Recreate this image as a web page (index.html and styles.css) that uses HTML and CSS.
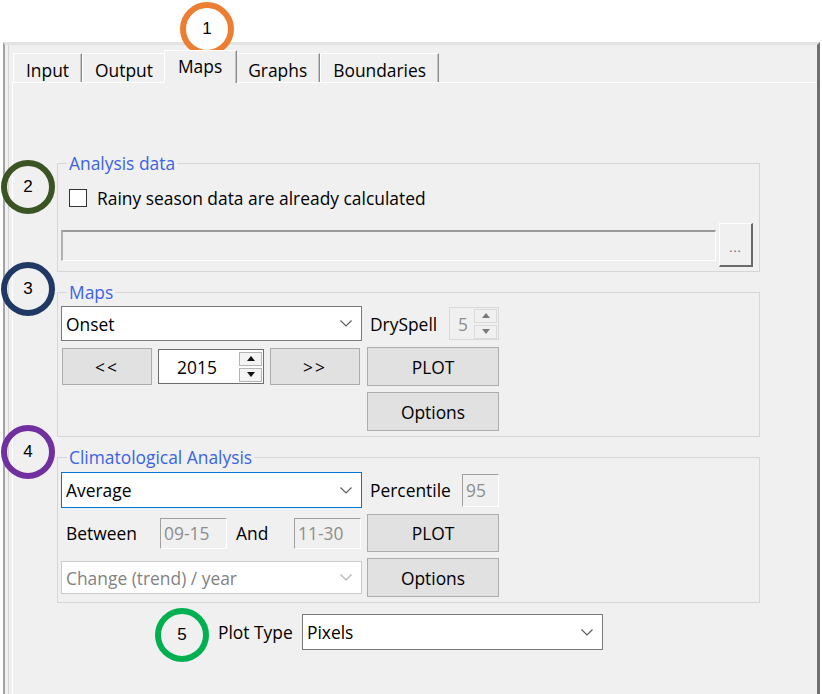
FILE: index.html
```html
<!DOCTYPE html>
<html lang="en">
<head>
<meta charset="utf-8">
<title>Maps</title>
<link rel="stylesheet" href="styles.css">
</head>
<body>
<div class="window">
  <div class="frame">
    <div class="tabs">
      <div class="tab">Input</div>
      <div class="tab">Output</div>
      <div class="tab active">Maps</div>
      <div class="tab">Graphs</div>
      <div class="tab">Boundaries</div>
    </div>
    <div class="page">
      <fieldset class="group g-data">
        <legend>Analysis data</legend>
        <label class="check-row"><span class="checkbox"></span>Rainy season data are already calculated</label>
        <div class="file-row">
          <div class="sunken path-field"></div>
          <div class="browse">...</div>
        </div>
      </fieldset>

      <fieldset class="group g-maps">
        <legend>Maps</legend>
        <div class="ctl-grid maps-grid">
          <div class="combo"><span>Onset</span><svg class="chev" width="12" height="7" viewBox="0 0 12 7"><polyline points="0.5,0.5 6,6 11.5,0.5"/></svg></div>
          <div class="pair"><span>DrySpell</span>
            <div class="spin spin-small disabled"><span class="spin-val">5</span><span class="arrows"><span class="arr up"></span><span class="arr down"></span></span></div>
          </div>
          <div class="nav">
            <button class="btn nav-btn">&lt;&lt;</button>
            <div class="spin year"><span class="spin-val">2015</span><span class="arrows"><span class="arr up"></span><span class="arr down"></span></span></div>
            <button class="btn nav-btn">&gt;&gt;</button>
          </div>
          <button class="btn">PLOT</button>
          <div></div>
          <button class="btn">Options</button>
        </div>
      </fieldset>

      <fieldset class="group g-clim">
        <legend>Climatological Analysis</legend>
        <div class="ctl-grid clim-grid">
          <div class="combo focused"><span>Average</span><svg class="chev" width="12" height="7" viewBox="0 0 12 7"><polyline points="0.5,0.5 6,6 11.5,0.5"/></svg></div>
          <div class="pair"><span>Percentile</span><div class="sunken small-field">95</div></div>
          <div class="range">
            <span>Between</span>
            <div class="sunken date-field">09-15</div>
            <span class="and">And</span>
            <div class="sunken date-field">11-30</div>
          </div>
          <button class="btn">PLOT</button>
          <div class="combo disabled-combo"><span>Change (trend) / year</span><svg class="chev" width="12" height="7" viewBox="0 0 12 7"><polyline points="0.5,0.5 6,6 11.5,0.5"/></svg></div>
          <button class="btn">Options</button>
        </div>
      </fieldset>

      <div class="plot-row">
        <span>Plot Type</span>
        <div class="combo"><span>Pixels</span><svg class="chev" width="12" height="7" viewBox="0 0 12 7"><polyline points="0.5,0.5 6,6 11.5,0.5"/></svg></div>
      </div>
    </div>
  </div>
</div>

<div class="marker m1">1</div>
<div class="marker m2">2</div>
<div class="marker m3">3</div>
<div class="marker m4">4</div>
<div class="marker m5">5</div>
</body>
</html>
```

FILE: styles.css
```css
* { box-sizing: border-box; }
html, body { margin: 0; padding: 0; }
body {
  position: relative;
  width: 822px;
  height: 694px;
  overflow: hidden;
  background: #fff;
  font-family: "Open Sans", "Noto Sans", sans-serif;
  font-size: 17.4px;
  color: #000;
}

.window {
  display: flex;
  height: 652px;
  margin: 42px 2px 0 3px;
  background: #f0f0f0;
  border-top: 3px solid #e3e3e3;
  border-left: 2px solid #a3a3a3;
  border-right: 3px solid #707070;
}
.frame {
  flex: 1;
  display: flex;
  flex-direction: column;
  margin-left: 3px;
  padding-left: 4px;
  border-left: 1px solid #d4d4d4;
}

/* tabs */
.tabs {
  display: flex;
  align-items: flex-end;
  height: 32px;
  margin-top: 5px;
}
.tab {
  height: 29px;
  padding: 4px 12px 0 12px;
  line-height: 24px;
  background: #f0f0f0;
  border-top: 1px solid #fff;
  border-left: 1px solid #fff;
  border-right: 1px solid #8c8c8c;
  box-shadow: inset -1px 0 0 #c4c4c4;
}
.tab.active {
  position: relative;
  z-index: 1;
  height: 33px;
  margin: 0 -2px -1px -2px;
  padding: 3px 14px 0 13px;
}

.page {
  flex: 1;
  margin-left: -1px;
  padding-top: 70px;
  border-top: 1px solid #fff;
  border-left: 1px solid #fff;
}

/* group boxes */
.group {
  width: 703px;
  min-width: 0;
  margin: 0 0 0 44px;
  padding: 0 5px 5px 3px;
  border: 1px solid #d6d6d6;
}
.group legend {
  margin-left: 6px;
  padding: 0 2px;
  line-height: 20px;
  color: #3b63e6;
}
.g-data { padding-bottom: 4px; }
.g-maps, .g-clim { margin-top: 10px; }

.check-row {
  display: flex;
  align-items: center;
  gap: 10px;
  height: 22px;
  margin-top: 14px;
  padding-left: 8px;
}
.checkbox {
  width: 18px;
  height: 18px;
  background: #fff;
  border: 1px solid #333;
}
.file-row {
  display: flex;
  align-items: center;
  gap: 3px;
  height: 44px;
  margin-top: 14px;
}
.sunken {
  background: #f0f0f0;
  color: #8d8d8d;
  border-top: 1px solid #a0a0a0;
  border-left: 1px solid #a0a0a0;
  border-right: 1px solid #fff;
  border-bottom: 1px solid #fff;
  padding-left: 3px;
  line-height: 29px;
}
.path-field {
  width: 655px;
  height: 31px;
  border-top: 2px solid #9a9a9a;
  border-left: 2px solid #b0b0b0;
}
.browse {
  width: 34px;
  height: 44px;
  padding-top: 15px;
  text-align: center;
  font-size: 12px;
  letter-spacing: 1px;
  color: #5a5a7a;
  background: #f0f0f0;
  border-top: 1px solid #fff;
  border-left: 1px solid #fff;
  border-right: 2px solid #6a6a6a;
  border-bottom: 2px solid #6a6a6a;
}

/* control grids */
.ctl-grid {
  display: grid;
  grid-template-columns: 301px 132px;
  column-gap: 5px;
}
.maps-grid {
  margin-top: 4px;
  grid-template-rows: 35px 39px 39px;
  row-gap: 6px;
}
.clim-grid {
  margin-top: 5px;
  grid-template-rows: 36px 38px 39px;
  row-gap: 6px;
}

.combo {
  display: flex;
  align-items: center;
  justify-content: space-between;
  padding: 0 9px 0 4px;
  background: #fff;
  border: 1px solid #7a7a7a;
  white-space: nowrap;
}
.chev { fill: none; stroke: #5f5f5f; stroke-width: 1.2; }
.combo.focused { border-color: #0078d7; }
.disabled-combo {
  height: 33px;
  align-self: center;
  color: #838383;
  border-color: #cccccc;
}
.disabled-combo .chev { stroke: #b4b4b4; }

.pair {
  display: flex;
  align-items: center;
  justify-content: space-between;
  padding-left: 3px;
}

.btn {
  margin: 0;
  padding: 0;
  font: inherit;
  color: #000;
  background: #e1e1e1;
  border: 1px solid #adadad;
}

.nav {
  display: flex;
  align-items: center;
  gap: 6px;
  padding-left: 1px;
}
.nav-btn {
  width: 90px;
  height: 37px;
  letter-spacing: 2px;
}

.spin {
  display: flex;
  align-items: center;
  background: #fff;
  border: 1px solid #6e6e6e;
}
.spin-val { flex: 1; }
.year {
  width: 106px;
  height: 35px;
}
.year .spin-val { text-align: center; padding-right: 4px; }
.arrows {
  display: flex;
  flex-direction: column;
  gap: 2px;
  margin-right: 1px;
}
.arr {
  display: flex;
  align-items: center;
  justify-content: center;
  width: 23px;
  height: 14px;
  background: #f4f4f4;
  border: 1px solid #b4b4b4;
}
.arr::after {
  content: "";
  border-left: 4px solid transparent;
  border-right: 4px solid transparent;
}
.arr.up::after { border-bottom: 5px solid #111; }
.arr.down::after { border-top: 5px solid #111; }

.spin-small {
  width: 50px;
  height: 33px;
  background: #f0f0f0;
  border-color: #d9d9d9;
  color: #8d8d8d;
}
.spin-small .spin-val { padding-left: 8px; }
.spin-small .arr { background: #f0f0f0; border-color: #dadada; }
.spin-small .arr.up::after { border-bottom-color: #7a7a7a; }
.spin-small .arr.down::after { border-top-color: #7a7a7a; }

.small-field {
  width: 37px;
  height: 33px;
  line-height: 31px;
}

.range {
  display: grid;
  grid-template-columns: 94px 67px 67px 67px;
  align-items: center;
  padding-left: 5px;
}
.range .and { padding-left: 9px; }
.date-field {
  height: 31px;
}

.plot-row {
  display: grid;
  grid-template-columns: 84px 301px;
  align-items: center;
  height: 36px;
  margin: 11px 0 0 205px;
}
.plot-row .combo { height: 36px; }

/* annotation markers */
.marker {
  position: absolute;
  width: 54px;
  height: 54px;
  display: flex;
  align-items: center;
  justify-content: center;
  border: 6px solid;
  border-radius: 50%;
  font-family: "Liberation Sans", sans-serif;
  font-size: 17px;
  color: #000;
}
.m1 { left: 180px; top: 2px; border-color: #ed7d31; background: #fff; }
.m2 { left: 1px; top: 160px; border-color: #3a5424; }
.m3 { left: 1px; top: 262px; border-color: #1f3864; }
.m4 { left: 1px; top: 425px; border-color: #7030a0; }
.m5 { left: 155px; top: 608px; border-color: #00b050; }
```
